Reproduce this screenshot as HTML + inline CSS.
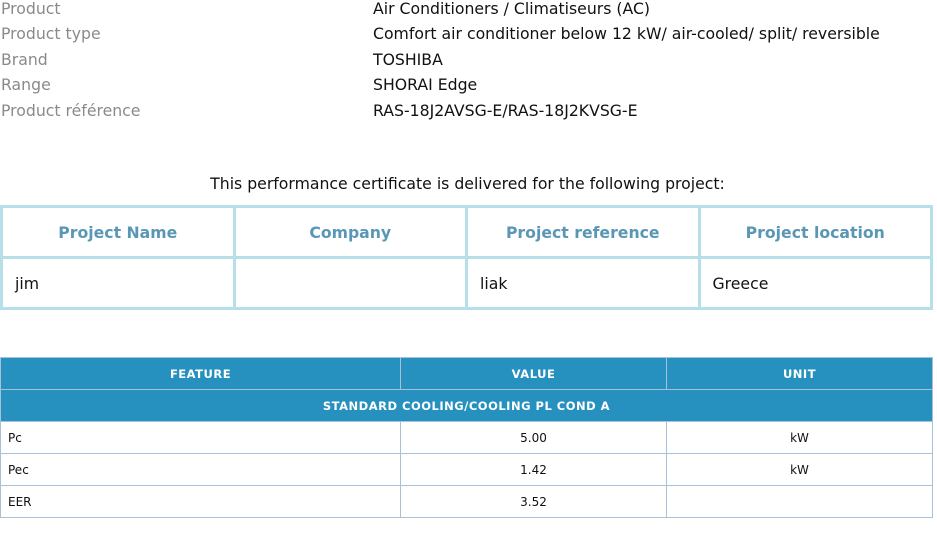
<!DOCTYPE html><html><head><style>
body{margin:0;width:937px;height:533px;background:#fff;font-family:"DejaVu Sans","Liberation Sans",sans-serif;position:relative;overflow:hidden}
.l,.v{position:absolute;font-size:15.7px;line-height:18px;white-space:nowrap}
.l{left:1px;color:#8a8a8a}.v{left:373px;color:#111}
.t{position:absolute;border-collapse:collapse;table-layout:fixed}
#p{left:0;top:205px;width:933px}
#p td{border:3px solid #b7dfe9;height:48px;font-size:15.7px;padding:0}
#p th{border:3px solid #b7dfe9;height:48px;font-size:15.7px;color:#5a97b5;font-weight:bold;text-align:center;padding:0}
#p td{padding-left:12px;color:#111}
#f{left:0;top:357px;width:932px}
#f td,#f th{border:1px solid #a9c0d9;height:31px;font-size:12px;padding:0;text-align:center;color:#111}
#f th{background:#2690bf;color:#fff;font-weight:bold;letter-spacing:.5px;font-size:11.5px}
#f td.a{text-align:left;padding-left:7px}
</style></head><body>
<div class="l" style="top:0">Product</div><div class="v" style="top:0">Air Conditioners / Climatiseurs (AC)</div>
<div class="l" style="top:25px">Product type</div><div class="v" style="top:25px">Comfort air conditioner below 12 kW/ air-cooled/ split/ reversible</div>
<div class="l" style="top:51px">Brand</div><div class="v" style="top:51px">TOSHIBA</div>
<div class="l" style="top:76px">Range</div><div class="v" style="top:76px">SHORAI Edge</div>
<div class="l" style="top:102px">Product référence</div><div class="v" style="top:102px">RAS-18J2AVSG-E/RAS-18J2KVSG-E</div>
<div class="v" style="left:0;width:935px;text-align:center;top:175px">This performance certificate is delivered for the following project:</div>
<table class="t" id="p"><tr><th>Project Name</th><th>Company</th><th>Project reference</th><th>Project location</th></tr>
<tr><td>jim</td><td></td><td>liak</td><td>Greece</td></tr></table>
<table class="t" id="f"><colgroup><col style="width:400px"><col style="width:266px"><col style="width:266px"></colgroup>
<tr><th>FEATURE</th><th>VALUE</th><th>UNIT</th></tr>
<tr><th colspan="3">STANDARD COOLING/COOLING PL COND A</th></tr>
<tr><td class="a">Pc</td><td>5.00</td><td>kW</td></tr>
<tr><td class="a">Pec</td><td>1.42</td><td>kW</td></tr>
<tr><td class="a">EER</td><td>3.52</td><td></td></tr></table>
</body></html>
